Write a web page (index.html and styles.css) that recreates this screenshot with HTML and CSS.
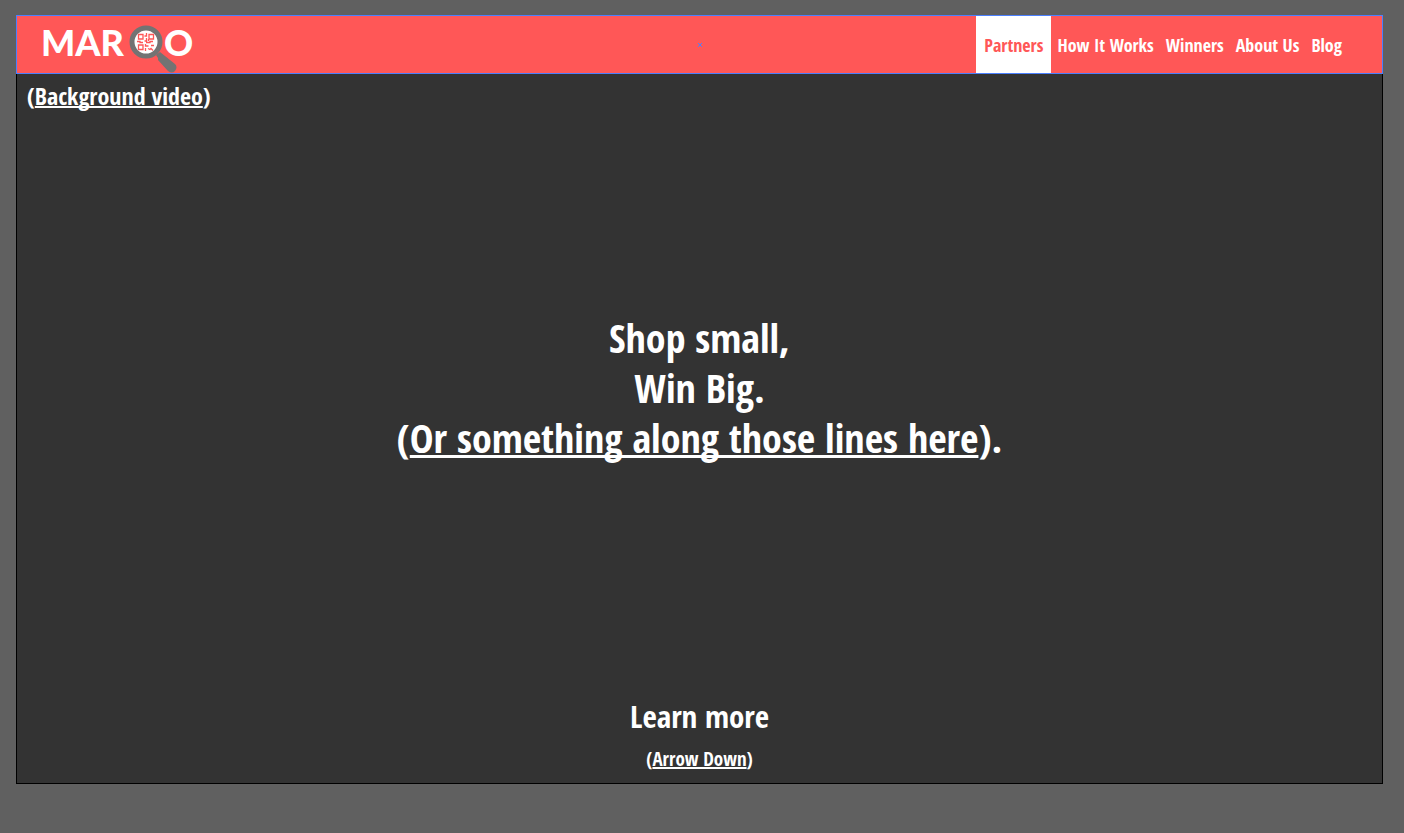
FILE: index.html
```html
<!DOCTYPE html>
<html lang="en">
<head>
<meta charset="utf-8">
<title>MARQO</title>
<meta name="viewport" content="width=device-width, initial-scale=1">
<link rel="stylesheet" href="styles.css">
</head>
<body>
<div class="artboard">
  <header class="topbar">
    <a class="logo" href="#" aria-label="MARQO">
      <span class="logo-start">MAR</span>
      <svg class="lens" viewBox="0 0 50 50" aria-hidden="true">
        <path d="M28 31 32 28 47 40Q50 43 47 47Q44 50 40 47L30 36V34Z" fill="#737373"/>
        <circle cx="18" cy="18" r="14" fill="#fff" stroke="#737373" stroke-width="5"/>
        <g fill="none" stroke="#ff5757" stroke-width="1.300">
          <path d="M10.500 10.500h4.500v4.500h-4.500zM21 10.500h4.500v4.500h-4.500zM10.500 21h4.500v4.500h-4.500z"/>
          <path d="M18.500 9v3h-2M18.500 14v3h-2M9 17.500h3v1h3M18 18.500h4v-1h3M17.500 20v2h3M17.500 24v3M20 24.500l2 1 1-1 2 2M23 21.500h3M20.500 15v2"/>
        </g>
      </svg>
      <span>O</span>
    </a>
    <nav class="nav">
      <a class="nav-link active" href="#">Partners</a>
      <a class="nav-link" href="#">How It Works</a>
      <a class="nav-link" href="#">Winners</a>
      <a class="nav-link" href="#">About Us</a>
      <a class="nav-link" href="#">Blog</a>
    </nav>
    <svg class="center-mark" viewBox="0 0 4 4" aria-hidden="true"><path d="M0 0 4 4M4 0 0 4" stroke="#4a80ff" stroke-width="1"/></svg>
  </header>
  <main class="hero">
    <p class="video-note"><span class="paren">(</span><u>Background video</u><span class="paren">)</span></p>
    <h1 class="headline">Shop small,<br>Win Big.<br><span class="paren">(</span><u>Or something along those lines here</u><span class="paren">)</span>.</h1>
    <a class="more" href="#">
      <span class="more-title">Learn more</span>
      <span class="more-note"><span class="paren">(</span><u>Arrow Down</u><span class="paren">)</span></span>
    </a>
  </main>
</div>
</body>
</html>
```
FILE: styles.css
```css
* { box-sizing: border-box; }

body {
  margin: 0;
  min-height: 100vh;
  padding: 15px 21px 49px 16px;
  display: flex;
  background: #606060;
  color: #fff;
  font-family: "Futura Condensed", "Open Sans Condensed", "Open Sans", sans-serif;
  font-weight: 800;
}

a { color: inherit; text-decoration: none; }
u { text-decoration-skip-ink: none; text-decoration-thickness: 2px; }

.paren { font-weight: 300; }

.artboard {
  flex: 1;
  display: flex;
  flex-direction: column;
}

.topbar {
  position: relative;
  display: flex;
  justify-content: space-between;
  height: 59px;
  padding: 0 34px 0 24px;
  border: 1px solid #4a80ff;
  background: #ff5757;
}

.logo {
  display: flex;
  align-items: flex-start;
  font-family: Lato, sans-serif;
  font-size: 36px;
  font-weight: 900;
  line-height: 52px;
}

.logo-start { margin-right: 4px; }

.lens {
  width: 50px;
  height: 50px;
  margin: 8px -14px 0 0;
}

.nav { display: flex; }

.nav-link {
  display: flex;
  align-items: center;
  padding: 0 6px;
  font-size: 18px;
}

.nav-link.active {
  padding: 0 8px;
  background: #fff;
  color: #ff5757;
}

.center-mark {
  position: absolute;
  top: 50%;
  left: 50%;
  width: 4px;
  height: 4px;
  transform: translate(-50%, -50%);
}

.hero {
  flex: 1;
  display: grid;
  grid-template-rows: 1fr auto 1fr;
  justify-items: center;
  padding: 7px 10px 12px;
  border: 1px solid #000;
  border-top: 0;
  background: #333;
}

.video-note {
  justify-self: start;
  margin: 0;
  font-size: 24px;
  line-height: 30px;
}

.headline {
  margin: 0 0 76px;
  font-size: 40px;
  line-height: 50px;
  text-align: center;
}

.headline u { text-decoration-thickness: 3px; }

.more {
  align-self: end;
  display: flex;
  flex-direction: column;
  align-items: center;
  gap: 10px;
}

.more-title { font-size: 31px; line-height: 42px; }
.more-note { font-size: 19px; line-height: 24px; }
```
